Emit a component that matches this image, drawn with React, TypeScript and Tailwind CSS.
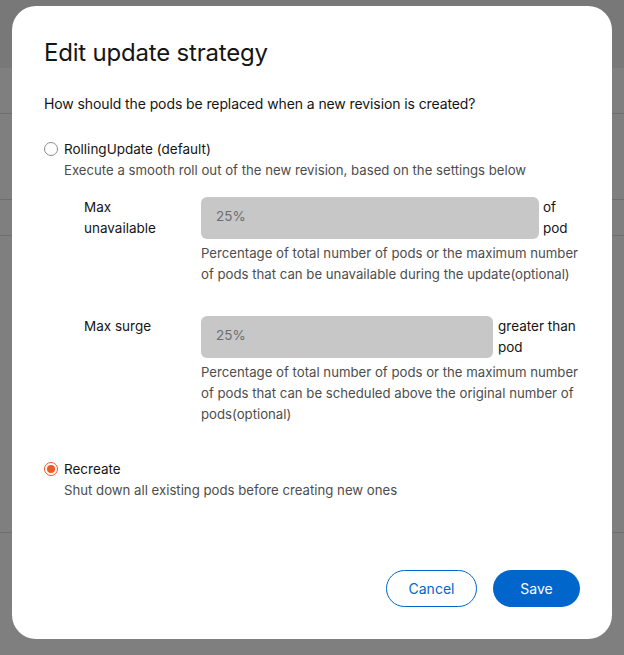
import React, { useState } from 'react';

const font = { fontFamily: '"Inter", "Noto Sans", sans-serif' };

type Strategy = 'RollingUpdate' | 'Recreate';

const Radio: React.FC<{ checked: boolean; onClick: () => void }> = ({ checked, onClick }) => (
  <button
    type="button"
    onClick={onClick}
    className={`mt-[3px] w-[14px] h-[14px] shrink-0 rounded-full flex items-center justify-center ${checked ? 'border-[1.5px] border-[#ee5a24]' : 'border border-[#8a8d90]'}`}
  >
    {checked && <span className="block w-[8px] h-[8px] rounded-full bg-[#ee5a24]"></span>}
  </button>
);

const App: React.FC = () => {
  const [strategy, setStrategy] = useState<Strategy>('Recreate');

  return (
    <div className="relative w-[624px] h-[655px] bg-[#7f7f7f] overflow-hidden" style={font}>
      {/* page behind the backdrop */}
      <div className="h-[68px] bg-[#787878]"></div>
      <div className="h-[46px] border-b border-[#6e6e6e]"></div>
      <div className="h-[86px] border-b border-[#6e6e6e]"></div>
      <div className="h-[36px] border-b border-[#6e6e6e]"></div>
      <div className="h-[297px] border-b border-[#6e6e6e]"></div>

      <div className="absolute left-[12px] top-[6px] w-[600px] h-[633px] bg-white rounded-[24px] px-[32px] pt-[29px] pb-[32px] flex flex-col">
        <h1 className="text-[24px] leading-[36px] text-[#151515] font-normal tracking-[-0.2px]">Edit update strategy</h1>
        <p className="mt-[22px] text-[14px] leading-[21px] text-[#151515] tracking-[-0.1px]">
          How should the pods be replaced when a new revision is created?
        </p>

        <div className="mt-[25px] flex gap-[6px]">
          <Radio checked={strategy === 'RollingUpdate'} onClick={() => setStrategy('RollingUpdate')} />
          <div className="flex-1">
            <div className="text-[13.5px] leading-[21px] text-[#151515]">RollingUpdate (default)</div>
            <div className="text-[13.2px] leading-[21px] text-[#4d4d4d]">
              Execute a smooth roll out of the new revision, based on the settings below
            </div>

            <div className="mt-[16px] pl-[20px] flex flex-col gap-[31px]">
              <div className="flex">
                <div className="w-[117px] shrink-0 text-[13.5px] leading-[21px] text-[#151515]">
                  Max
                  <br />
                  unavailable
                </div>
                <div className="flex-1">
                  <div className="flex gap-[4px]">
                    <div className="w-[338px] h-[42px] rounded-[6px] bg-[#c7c7c7] px-[15px] pb-[3px] flex items-center text-[13.5px] text-[#6a6e73]">
                      25%
                    </div>
                    <div className="text-[13.5px] leading-[21px] text-[#151515] whitespace-nowrap">
                      of
                      <br />
                      pod
                    </div>
                  </div>
                  <p className="mt-[4px] text-[13.2px] leading-[21px] text-[#4d4d4d] whitespace-nowrap">
                    Percentage of total number of pods or the maximum number
                    <br />
                    of pods that can be unavailable during the update(optional)
                  </p>
                </div>
              </div>

              <div className="flex">
                <div className="w-[117px] shrink-0 text-[13.5px] leading-[21px] text-[#151515]">Max surge</div>
                <div className="flex-1">
                  <div className="flex gap-[5px]">
                    <div className="w-[292px] h-[42px] rounded-[6px] bg-[#c7c7c7] px-[15px] pb-[3px] flex items-center text-[13.5px] text-[#6a6e73]">
                      25%
                    </div>
                    <div className="text-[13.5px] leading-[21px] text-[#151515] whitespace-nowrap">
                      greater than
                      <br />
                      pod
                    </div>
                  </div>
                  <p className="mt-[4px] text-[13.2px] leading-[21px] text-[#4d4d4d] whitespace-nowrap">
                    Percentage of total number of pods or the maximum number
                    <br />
                    of pods that can be scheduled above the original number of
                    <br />
                    pods(optional)
                  </p>
                </div>
              </div>
            </div>
          </div>
        </div>

        <div className="mt-[34px] flex gap-[6px]">
          <Radio checked={strategy === 'Recreate'} onClick={() => setStrategy('Recreate')} />
          <div>
            <div className="text-[13.5px] leading-[21px] text-[#151515]">Recreate</div>
            <div className="text-[13.2px] leading-[21px] text-[#4d4d4d]">Shut down all existing pods before creating new ones</div>
          </div>
        </div>

        <div className="mt-auto flex justify-end gap-[16px]">
          <button type="button" className="w-[91px] h-[37px] rounded-full border border-[#0066cc] text-[#0066cc] text-[14px]">
            Cancel
          </button>
          <button type="button" className="w-[87px] h-[37px] rounded-full bg-[#0066cc] text-white text-[14px]">
            Save
          </button>
        </div>
      </div>
    </div>
  );
};

export default App;
